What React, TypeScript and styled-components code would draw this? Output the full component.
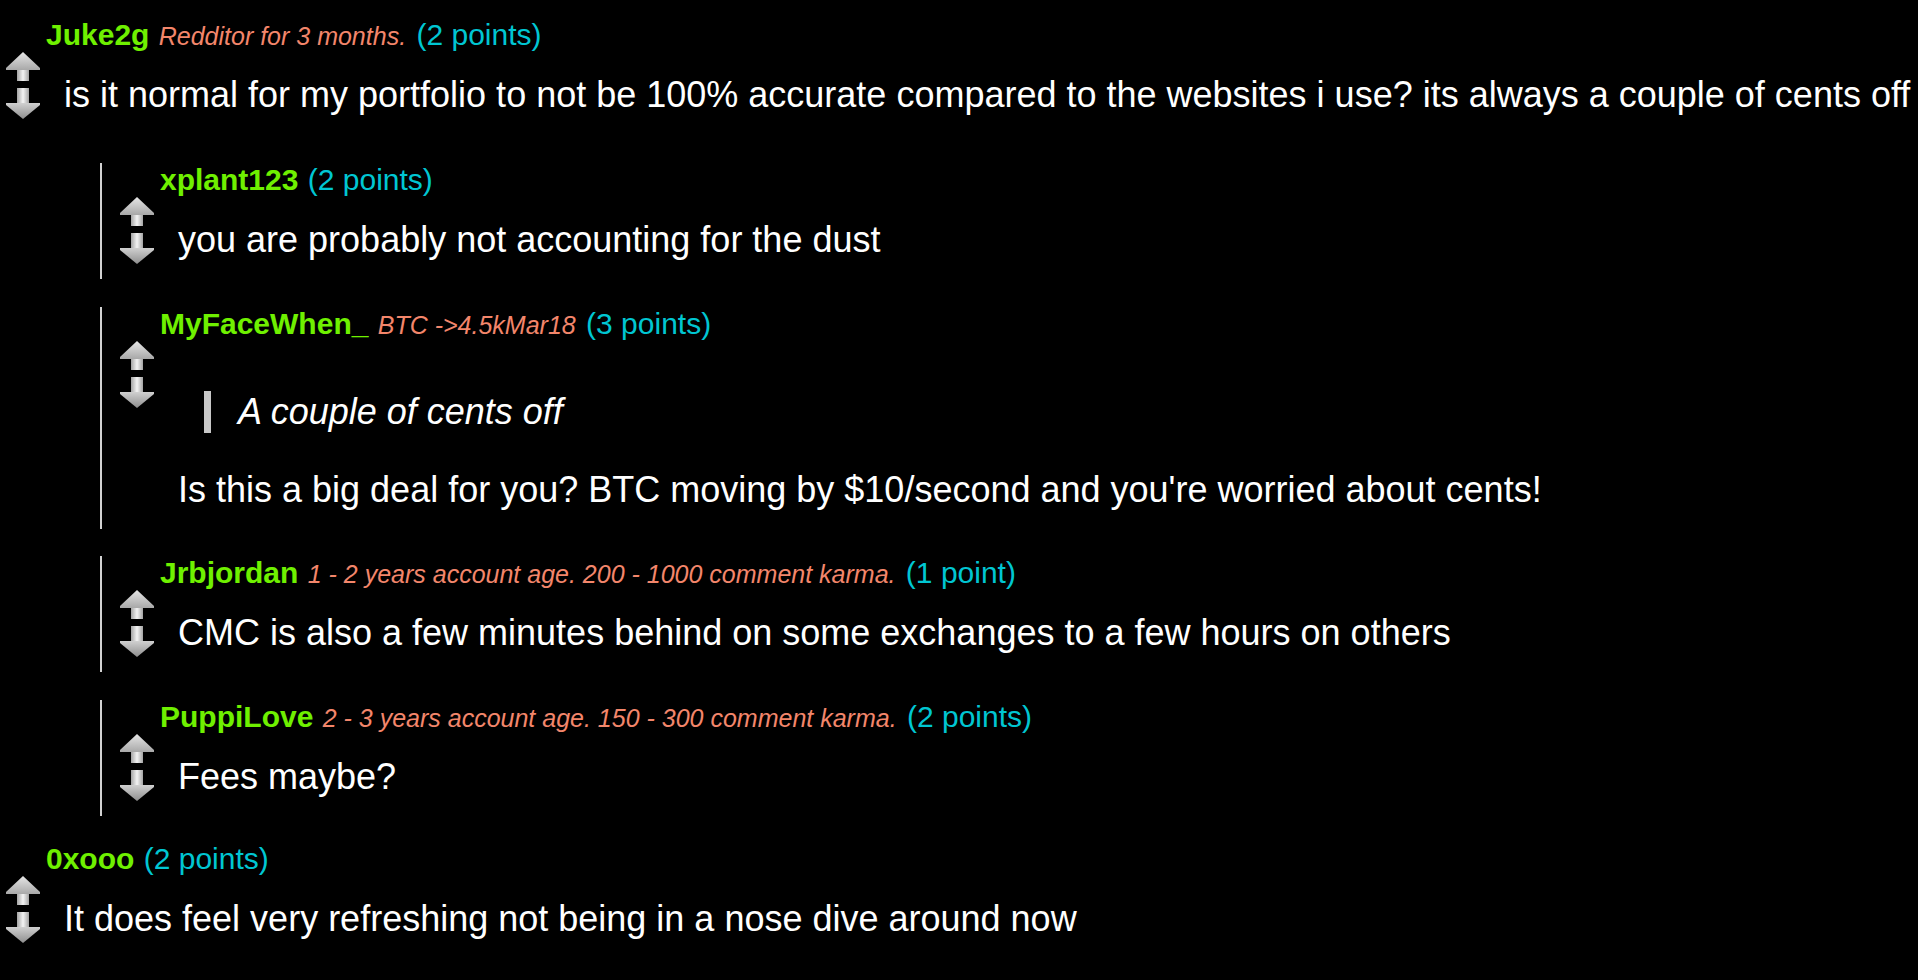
import React, { useId } from 'react';
import styled, { createGlobalStyle, css } from 'styled-components';

type Block = { kind: 'p' | 'quote'; text: string };
type CommentData = {
  name: string;
  flair?: string;
  points: string;
  body: Block[];
  replies?: CommentData[];
};

const thread: CommentData[] = [
  {
    name: 'Juke2g',
    flair: 'Redditor for 3 months.',
    points: '2 points',
    body: [
      {
        kind: 'p',
        text: 'is it normal for my portfolio to not be 100% accurate compared to the websites i use? its always a couple of cents off',
      },
    ],
    replies: [
      {
        name: 'xplant123',
        points: '2 points',
        body: [{ kind: 'p', text: 'you are probably not accounting for the dust' }],
      },
      {
        name: 'MyFaceWhen_',
        flair: 'BTC ->4.5kMar18',
        points: '3 points',
        body: [
          { kind: 'quote', text: 'A couple of cents off' },
          {
            kind: 'p',
            text: "Is this a big deal for you? BTC moving by $10/second and you're worried about cents!",
          },
        ],
      },
      {
        name: 'Jrbjordan',
        flair: '1 - 2 years account age. 200 - 1000 comment karma.',
        points: '1 point',
        body: [
          { kind: 'p', text: 'CMC is also a few minutes behind on some exchanges to a few hours on others' },
        ],
      },
      {
        name: 'PuppiLove',
        flair: '2 - 3 years account age. 150 - 300 comment karma.',
        points: '2 points',
        body: [{ kind: 'p', text: 'Fees maybe?' }],
      },
    ],
  },
  {
    name: '0xooo',
    points: '2 points',
    body: [{ kind: 'p', text: 'It does feel very refreshing not being in a nose dive around now' }],
  },
];

const GlobalStyle = createGlobalStyle`
  html, body {
    margin: 0;
    padding: 0;
    background: #000;
  }
  body {
    font-family: "Liberation Sans", Arial, Helvetica, sans-serif;
    color: #fff;
  }
`;

const Thread = styled.div`
  display: flex;
  flex-direction: column;
  gap: 26px;
  padding: 18px 0 0 6px;
  background: #000;
`;

const CommentBox = styled.div<{ $nested: boolean }>`
  display: flex;
  flex-direction: column;
  ${({ $nested }) =>
    $nested &&
    css`
      border-left: 2px solid #d2d2d2;
      padding-left: 18px;
    `}
`;

const Header = styled.div`
  margin-left: 40px;
  font-size: 30px;
  line-height: normal;
  white-space: nowrap;
`;

const Author = styled.span`
  font-weight: bold;
  color: #6ff000;
  margin-right: 1px;
`;

const Flair = styled.span`
  font-size: 25px;
  font-style: italic;
  color: #f3866b;
  margin-right: 2px;
`;

const Points = styled.span`
  color: #00c6d2;
`;

const Row = styled.div`
  display: flex;
  align-items: flex-start;
`;

const VoteArrows = styled.svg`
  flex: 0 0 auto;
  width: 34px;
  height: 67px;
  margin-right: 24px;
`;

const Body = styled.div`
  flex: 1 1 auto;
  min-width: 0;
`;

const Para = styled.p`
  margin: 22px 0 18px;
  font-size: 36px;
  line-height: normal;
`;

const Quote = styled.blockquote`
  margin: 50px 0 36px 26px;
  padding-left: 27px;
  border-left: 7px solid #c8c8c8;
  font-size: 36px;
  font-style: italic;
  line-height: normal;
`;

const Replies = styled.div`
  display: flex;
  flex-direction: column;
  gap: 27.5px;
  margin: 29px 0 0 94px;
`;

const Arrows: React.FC = () => {
  const id = useId().replace(/[^a-zA-Z0-9]/g, '');
  return (
    <VoteArrows viewBox="0 0 34 67" aria-hidden="true">
      <defs>
        <linearGradient id={`${id}h`} x1="0" y1="0" x2="0" y2="1">
          <stop offset="0" stopColor="#e6e6e6" />
          <stop offset="1" stopColor="#a8a8a8" />
        </linearGradient>
        <linearGradient id={`${id}s`} x1="0" y1="0" x2="1" y2="0">
          <stop offset="0" stopColor="#a4a4a4" />
          <stop offset="0.5" stopColor="#f4f4f4" />
          <stop offset="1" stopColor="#a4a4a4" />
        </linearGradient>
        <linearGradient id={`${id}d`} x1="0" y1="0" x2="0" y2="1">
          <stop offset="0" stopColor="#d0d0d0" />
          <stop offset="1" stopColor="#8e8e8e" />
        </linearGradient>
      </defs>
      <polygon points="17,0 34,16 34,18 0,18 0,16" fill={`url(#${id}h)`} />
      <rect x="11" y="18" width="12" height="11" fill={`url(#${id}s)`} />
      <rect x="11" y="36" width="12" height="16" fill={`url(#${id}s)`} />
      <polygon points="0,51 34,51 34,53 17,67 0,53" fill={`url(#${id}d)`} />
    </VoteArrows>
  );
};

const Comment: React.FC<{ data: CommentData; nested?: boolean }> = ({ data, nested = false }) => (
  <CommentBox $nested={nested}>
    <Header>
      <Author>{data.name}</Author>{' '}
      {data.flair && (
        <>
          <Flair>{data.flair}</Flair>{' '}
        </>
      )}
      <Points>({data.points})</Points>
    </Header>
    <Row>
      <Arrows />
      <Body>
        {data.body.map((b, i) =>
          b.kind === 'quote' ? <Quote key={i}>{b.text}</Quote> : <Para key={i}>{b.text}</Para>
        )}
      </Body>
    </Row>
    {data.replies && (
      <Replies>
        {data.replies.map((r) => (
          <Comment key={r.name} data={r} nested />
        ))}
      </Replies>
    )}
  </CommentBox>
);

export default function App() {
  return (
    <>
      <GlobalStyle />
      <Thread>
        {thread.map((c) => (
          <Comment key={c.name} data={c} />
        ))}
      </Thread>
    </>
  );
}
